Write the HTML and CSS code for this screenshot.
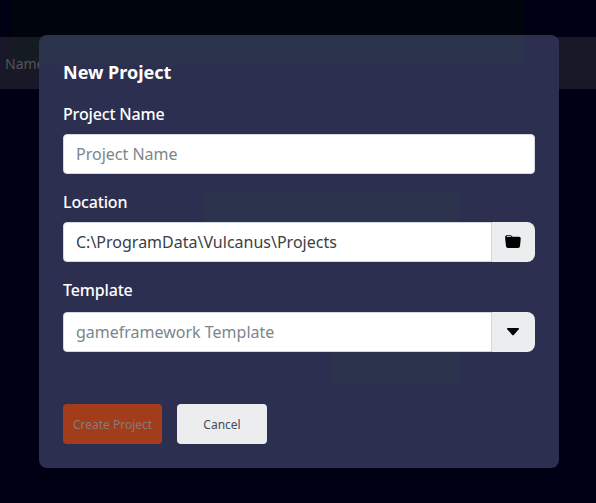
FILE: index.html
```html
<!DOCTYPE html>
<html lang="en">
<head>
<meta charset="utf-8">
<title>New Project</title>
<link rel="stylesheet" href="styles.css">
</head>
<body>
<div class="table-head"><span>Name</span></div>
<form class="modal">
  <h1 class="title">New Project</h1>
  <label class="label" for="name">Project Name</label>
  <div class="field"><input class="input" id="name" type="text" placeholder="Project Name"></div>
  <label class="label" for="location">Location</label>
  <div class="field">
    <input class="input joined" id="location" type="text" value="C:\ProgramData\Vulcanus\Projects">
    <button class="addon" type="button" aria-label="Browse">
      <svg width="18" height="16" viewBox="0 0 18 16"><path d="M1.2 3.6V2.7Q1.2 1.2 2.7 1.2H6.5Q7.5 1.2 8.5 2.7H15Q17 2.7 16.7 5L16 12.2Q15.8 14 14 14H4Q2.2 14 2 12.2L1.2 5Z"/><path d="M2.7 2.9Q2.8 2.1 3.6 2.1H6.5Q7 2.1 7.5 2.8Z" fill="#ebedee"/></svg>
    </button>
  </div>
  <label class="label" for="template">Template</label>
  <div class="field last">
    <input class="input joined" id="template" type="text" placeholder="gameframework Template">
    <button class="addon" type="button" aria-label="Choose template">
      <svg width="14" height="10" viewBox="0 0 14 10"><path d="M1.6 1H12.4Q13.4 1.2 12.7 2.3L8 7.8Q7 8.8 6 7.8L1.3 2.3Q.6 1.2 1.6 1Z"/></svg>
    </button>
  </div>
  <div class="actions">
    <button class="btn create" type="button" disabled>Create Project</button>
    <button class="btn cancel" type="button">Cancel</button>
  </div>
</form>
</body>
</html>
```
FILE: styles.css
```css
* { box-sizing: border-box; }
body {
  margin: 0;
  height: 503px;
  padding-top: 37px;
  overflow: hidden;
  font-family: "Noto Sans", sans-serif;
  background: linear-gradient(#00050d, #00050d) 12px 0 / 512px 65px no-repeat #000014;
}
.table-head {
  height: 52px;
  padding: 0 5px;
  display: flex;
  align-items: center;
  font-size: 14px;
  color: #555459;
  background: linear-gradient(#151b23, #151b23) 12px 0 / 512px 28px no-repeat #181828;
}
.modal {
  position: absolute;
  left: 39px;
  top: 35px;
  width: 520px;
  height: 433px;
  padding: 24px;
  border-radius: 8px;
  background:
    linear-gradient(#2c334c, #2c334c) 0 0 / 485px 30px no-repeat,
    linear-gradient(#2c334c, #2c334c) 165px 157px / 256px 32px no-repeat,
    linear-gradient(#2c334c, #2c334c) 293px 315px / 128px 34px no-repeat,
    #2d2f50;
}
.title {
  margin: 0 0 8px;
  font-size: 18px;
  line-height: 27px;
  font-weight: 700;
  color: #fff;
}
.label {
  display: block;
  height: 40px;
  font-size: 16px;
  line-height: 40px;
  font-weight: 500;
  letter-spacing: -0.16px;
  color: #fff;
}
.field { display: flex; height: 40px; margin-bottom: 8px; }
.last { margin-top: 2px; margin-bottom: 52px; }
.input {
  flex: 1;
  min-width: 0;
  padding: 0 12px;
  border: 1px solid #d5d7e0;
  border-radius: 4px;
  background: #fff;
  font: 400 16px "Noto Sans", sans-serif;
  color: #3b4046;
}
.input::placeholder { color: #7d858c; opacity: 1; }
.joined { border-radius: 4px 0 0 4px; }
.addon {
  width: 43px;
  padding: 0 1px 0 0;
  border: 0;
  border-radius: 0 8px 8px 0;
  background: #ebedee;
  display: flex;
  align-items: center;
  justify-content: center;
}
.addon svg { margin-right: 1px; }
.actions { display: flex; gap: 15px; }
.btn {
  height: 40px;
  padding: 0;
  border: 0;
  border-radius: 4px;
  font: 400 12px "Noto Sans", sans-serif;
}
.create { width: 99px; background: #a33c1a; color: #857c7c; }
.cancel { width: 90px; background: #ebedee; color: #464b5b; }
```
